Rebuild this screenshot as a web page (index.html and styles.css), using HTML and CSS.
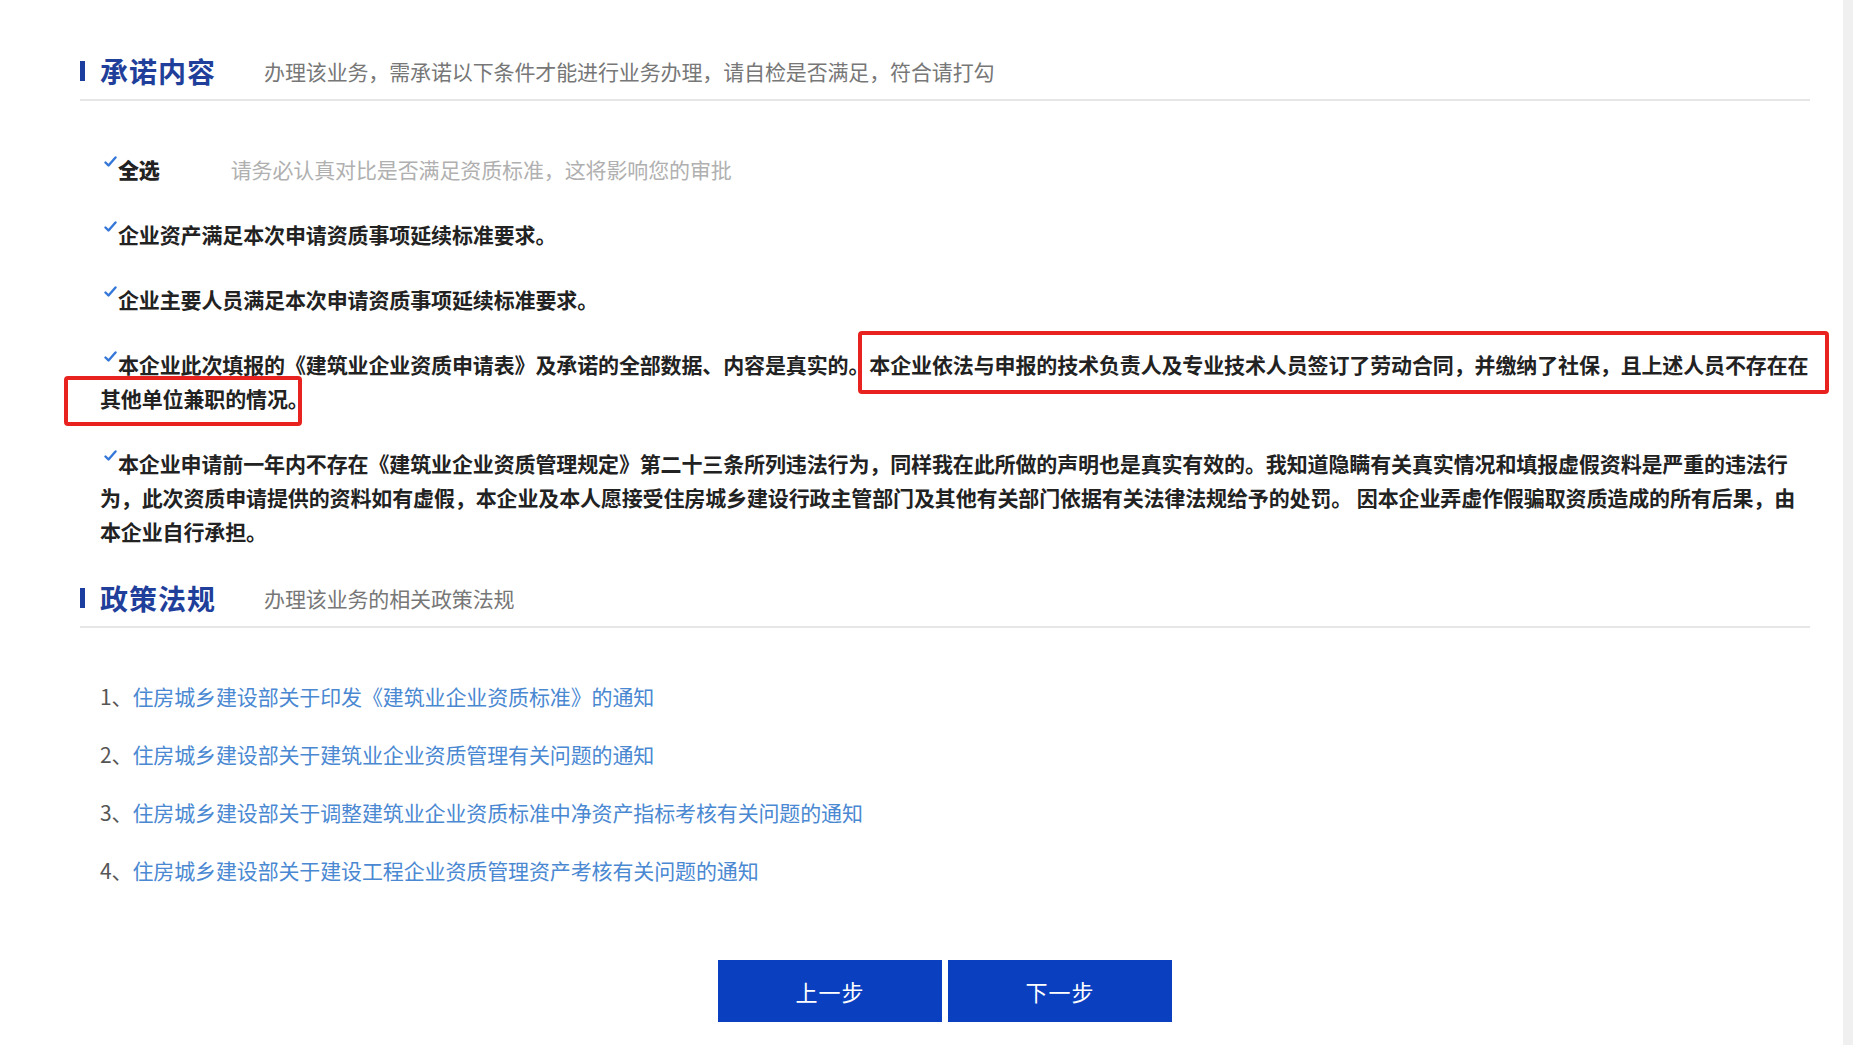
FILE: index.html
```html
<!DOCTYPE html>
<html lang="zh-CN">
<head>
    <meta charset="UTF-8">
    <meta name="viewport" content="width=device-width, initial-scale=1.0">
    <title>承诺内容</title>
    <link rel="stylesheet" href="styles.css">
</head>
<body>
    <div class="page">
        <div class="section-head">
            <span class="head-bar"></span>
            <h2>承诺内容</h2>
            <p>办理该业务，需承诺以下条件才能进行业务办理，请自检是否满足，符合请打勾</p>
        </div>

        <div class="pledges">
            <div class="item">
                <span class="tick"><svg width="13" height="11" viewBox="0 0 13 11"><path d="M1.5 6.5 L4.5 9.5 L11.5 1.5" fill="none" stroke="#3477d8" stroke-width="2.4" stroke-linecap="round" stroke-linejoin="round"/></svg></span><strong>全选</strong><span class="hint">请务必认真对比是否满足资质标准，这将影响您的审批</span>
            </div>
            <div class="item">
                <span class="tick"><svg width="13" height="11" viewBox="0 0 13 11"><path d="M1.5 6.5 L4.5 9.5 L11.5 1.5" fill="none" stroke="#3477d8" stroke-width="2.4" stroke-linecap="round" stroke-linejoin="round"/></svg></span>企业资产满足本次申请资质事项延续标准要求。
            </div>
            <div class="item">
                <span class="tick"><svg width="13" height="11" viewBox="0 0 13 11"><path d="M1.5 6.5 L4.5 9.5 L11.5 1.5" fill="none" stroke="#3477d8" stroke-width="2.4" stroke-linecap="round" stroke-linejoin="round"/></svg></span>企业主要人员满足本次申请资质事项延续标准要求。
            </div>
            <div class="item">
                <span class="tick"><svg width="13" height="11" viewBox="0 0 13 11"><path d="M1.5 6.5 L4.5 9.5 L11.5 1.5" fill="none" stroke="#3477d8" stroke-width="2.4" stroke-linecap="round" stroke-linejoin="round"/></svg></span>本企业此次填报的《建筑业企业资质申请表》及承诺的全部数据、内容是真实的。本企业依法与申报的技术负责人及专业技术人员签订了劳动合同，并缴纳了社保，且上述人员不存在在<br>其他单位兼职的情况。
                <span class="mark mark-one"></span>
                <span class="mark mark-two"></span>
            </div>
            <div class="item">
                <span class="tick"><svg width="13" height="11" viewBox="0 0 13 11"><path d="M1.5 6.5 L4.5 9.5 L11.5 1.5" fill="none" stroke="#3477d8" stroke-width="2.4" stroke-linecap="round" stroke-linejoin="round"/></svg></span>本企业申请前一年内不存在《建筑业企业资质管理规定》第二十三条所列违法行为，同样我在此所做的声明也是真实有效的。我知道隐瞒有关真实情况和填报虚假资料是严重的违法行<br>为，此次资质申请提供的资料如有虚假，本企业及本人愿接受住房城乡建设行政主管部门及其他有关部门依据有关法律法规给予的处罚。 因本企业弄虚作假骗取资质造成的所有后果，由<br>本企业自行承担。
            </div>
        </div>

        <div class="section-head">
            <span class="head-bar"></span>
            <h2>政策法规</h2>
            <p>办理该业务的相关政策法规</p>
        </div>

        <ul class="laws">
            <li><span class="num">1、</span><a href="#">住房城乡建设部关于印发《建筑业企业资质标准》的通知</a></li>
            <li><span class="num">2、</span><a href="#">住房城乡建设部关于建筑业企业资质管理有关问题的通知</a></li>
            <li><span class="num">3、</span><a href="#">住房城乡建设部关于调整建筑业企业资质标准中净资产指标考核有关问题的通知</a></li>
            <li><span class="num">4、</span><a href="#">住房城乡建设部关于建设工程企业资质管理资产考核有关问题的通知</a></li>
        </ul>

        <div class="actions">
            <button>上一步</button>
            <button>下一步</button>
        </div>
    </div>
    <div class="side-strip"></div>
</body>
</html>
```

FILE: styles.css
```css
* {
    margin: 0;
    padding: 0;
    box-sizing: border-box;
}

body {
    display: flex;
    min-height: 100vh;
    background-color: #fff;
    color: #222;
    font-family: "Noto Sans CJK SC", "Noto Sans", sans-serif;
}

.page {
    flex: 1;
    padding: 51px 33px 0 80px;
}

.side-strip {
    width: 10px;
    background-color: #f0f0f0;
}

/* section headers */
.section-head {
    display: flex;
    align-items: center;
    height: 50px;
    padding-bottom: 8px;
    border-bottom: 2px solid #e6e6e6;
}

.head-bar {
    width: 5px;
    height: 20px;
    margin-right: 15px;
    background-color: #1b3da0;
}

.section-head h2 {
    font-size: 28px;
    line-height: 40px;
    font-weight: 700;
    letter-spacing: 1px;
    color: #1f3f9b;
}

.section-head p {
    margin-left: 48px;
    font-size: 21px;
    line-height: 40px;
    letter-spacing: -0.13px;
    color: #777;
}

/* pledge items */
.pledges {
    margin-right: -12px;
    padding: 51px 0 30px 20px;
}

.item {
    position: relative;
    margin-bottom: 31px;
    font-size: 21px;
    line-height: 34px;
    font-weight: 700;
    letter-spacing: -0.13px;
    color: #222;
}

.item:last-child {
    margin-bottom: 0;
}

.tick {
    display: inline-block;
    width: 18px;
    height: 34px;
    padding: 4px 0 0 4px;
    vertical-align: top;
}

.tick svg {
    display: block;
}

.hint {
    margin-left: 71px;
    font-weight: 400;
    color: #b0b0b0;
}

.mark {
    position: absolute;
    border: 4px solid #e8231f;
    border-radius: 4px;
}

.mark-one {
    left: 758px;
    top: -16px;
    width: 971px;
    height: 63px;
}

.mark-two {
    left: -36px;
    top: 29px;
    width: 238px;
    height: 50px;
}

/* law links */
.laws {
    list-style: none;
    padding: 51px 0 0 20px;
}

.laws li {
    margin-bottom: 24px;
    font-size: 21px;
    line-height: 34px;
    letter-spacing: -0.13px;
}

.laws .num {
    color: #555;
}

.laws a {
    color: #4a88d2;
    text-decoration: none;
}

/* buttons */
.actions {
    display: flex;
    justify-content: center;
    gap: 6px;
    margin-top: 73px;
}

.actions button {
    width: 224px;
    height: 62px;
    border: none;
    background-color: #0a40c0;
    color: #fff;
    font-family: inherit;
    font-size: 22px;
    letter-spacing: 1px;
    cursor: pointer;
}
```
